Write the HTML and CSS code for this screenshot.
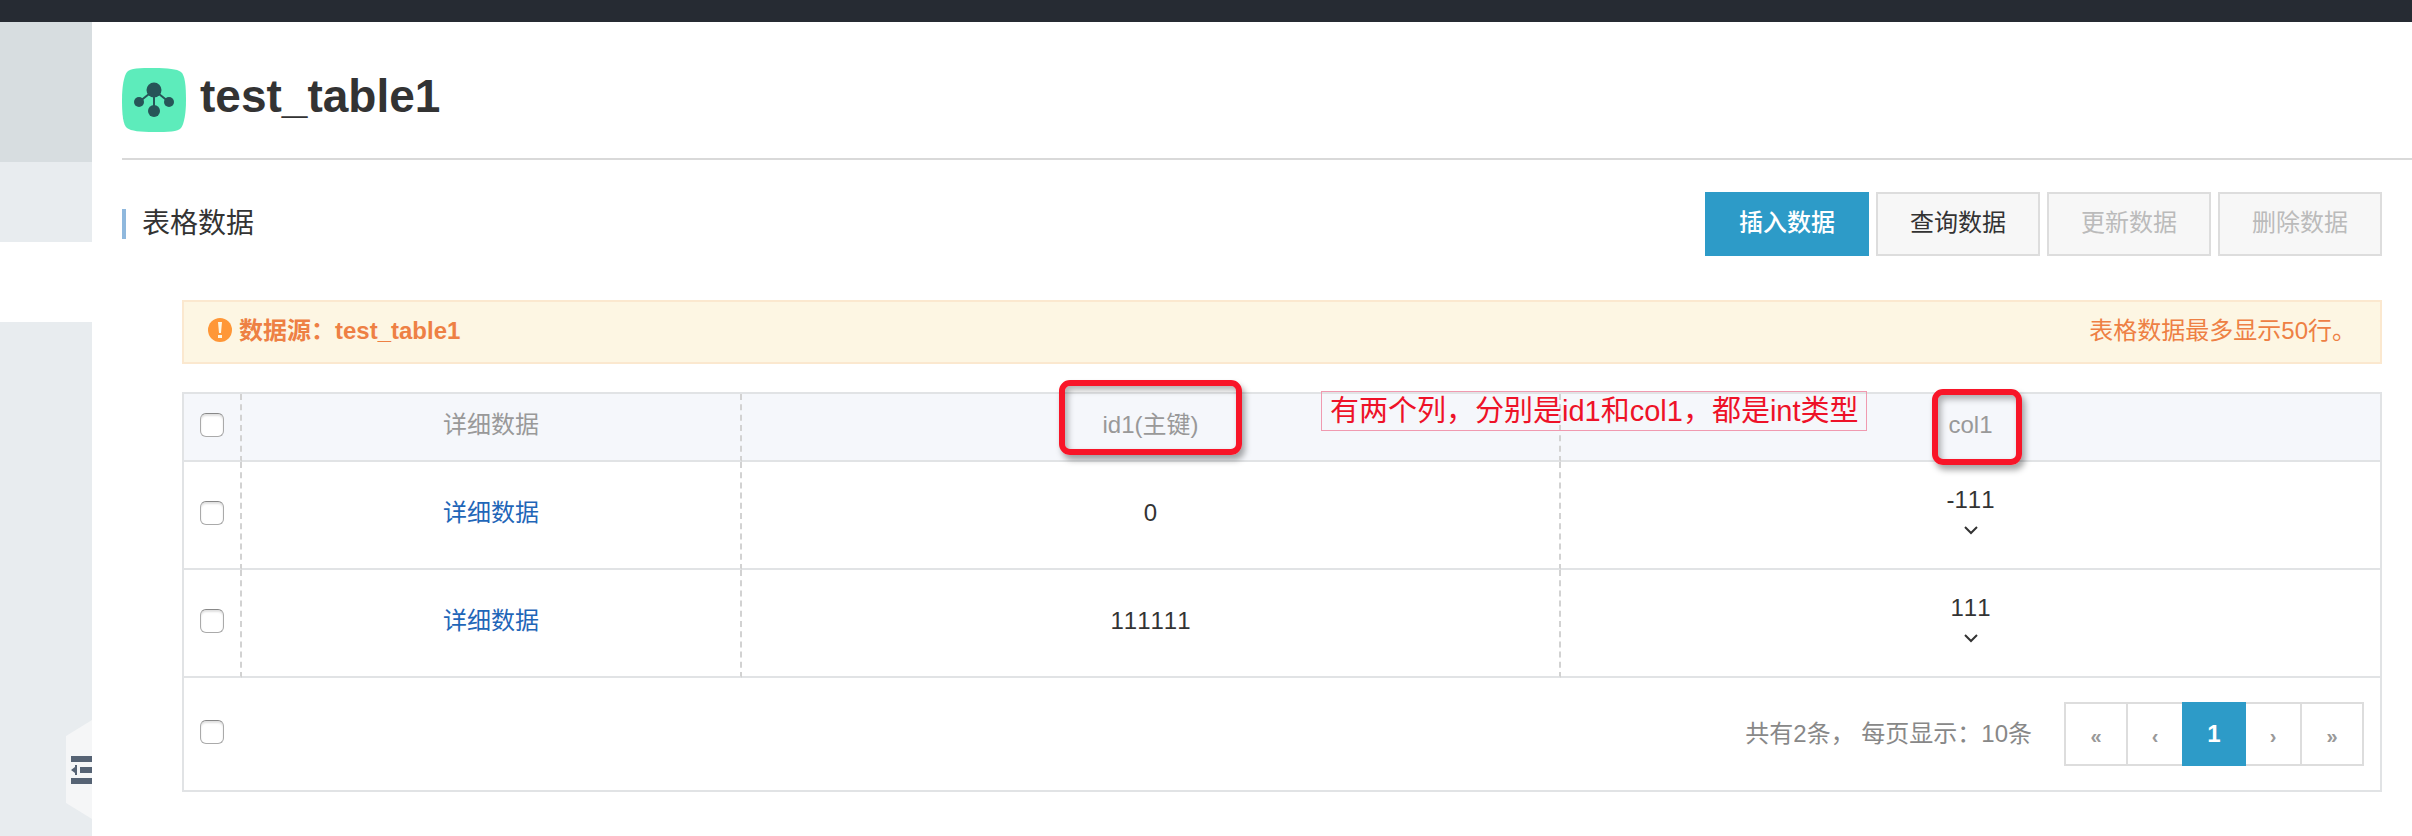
FILE: index.html
```
<!DOCTYPE html>
<html lang="zh-CN">
  <head>
    <meta charset="UTF-8" />
    <meta name="viewport" content="width=device-width, initial-scale=1.0" />
    <title>test_table1</title>
    <link rel="stylesheet" href="styles.css">
  </head>
  <body>
    <header class="topbar"></header>
    <div class="layout">
      <aside class="sidebar">
        <div class="side-group"></div>
        <div class="side-item"></div>
        <div class="side-item active"></div>
        <button class="side-toggle" type="button" aria-label="收起菜单">
          <svg width="26" height="100" viewBox="0 0 26 100">
            <path d="M26 0L0 16v67l26 16z" fill="#f5f6f7" />
            <path d="M5 36h21v6H5zM14 47h12v6H14zM5 58h21v6H5zM5 50l4-3v-2h2v10H9v-2z" fill="#566374" />
          </svg>
        </button>
      </aside>

      <main class="main">
        <div class="page-title">
          <svg class="title-icon" width="64" height="64" viewBox="0 0 64 64">
            <path d="M32 0C46 0 55 1 59 4S64 18 64 32s-2 24-5 28-13 4-27 4-23-1-27-4S0 46 0 32 2 8 5 4 18 0 32 0z" fill="#5decbb" />
            <path d="M32 22v21M32 22L17 34M32 22l15 12" stroke="#275558" stroke-width="2" fill="none" />
            <g fill="#275558">
              <circle cx="32" cy="22" r="7.5" />
              <circle cx="17" cy="34" r="5" />
              <circle cx="47" cy="34" r="5" />
              <circle cx="32" cy="43" r="6" />
            </g>
          </svg>
          <h1>test_table1</h1>
        </div>

        <div class="section-head">
          <h2>表格数据</h2>
          <div class="actions">
            <button class="btn btn-primary" type="button">插入数据</button>
            <button class="btn" type="button">查询数据</button>
            <button class="btn" type="button" disabled>更新数据</button>
            <button class="btn" type="button" disabled>删除数据</button>
          </div>
        </div>

        <div class="content">
          <div class="notice">
            <svg width="24" height="26" viewBox="0 0 24 26">
              <circle cx="12" cy="12" r="12" fill="#ff9737" />
              <path d="M10 4h4l-1 11h-2zM10 17h4v3h-4z" fill="#fdf6e3" />
            </svg>
            <strong>数据源：test_table1</strong>
            <span class="notice-tip">表格数据最多显示50行。</span>
          </div>

          <table class="data-table">
            <colgroup>
              <col class="col-check" />
              <col class="col-detail" />
              <col />
              <col />
            </colgroup>
            <thead>
              <tr>
                <th class="check"><input type="checkbox" aria-label="全选" /></th>
                <th>详细数据</th>
                <th>
                  id1(主键)
                  <span class="mark mark-id"></span>
                  <span class="note">有两个列，分别是id1和col1，都是int类型</span>
                </th>
                <th>
                  col1
                  <span class="mark mark-col"></span>
                </th>
              </tr>
            </thead>
            <tbody>
              <tr>
                <td class="check"><input type="checkbox" aria-label="选择第1行" /></td>
                <td><a href="#">详细数据</a></td>
                <td>0</td>
                <td>
                  <div class="value">-111</div>
                  <svg class="arrow" width="14" height="26" viewBox="0 0 14 26">
                    <path d="M1 13l6 6 6-6" />
                  </svg>
                </td>
              </tr>
              <tr>
                <td class="check"><input type="checkbox" aria-label="选择第2行" /></td>
                <td><a href="#">详细数据</a></td>
                <td>111111</td>
                <td>
                  <div class="value">111</div>
                  <svg class="arrow" width="14" height="26" viewBox="0 0 14 26">
                    <path d="M1 13l6 6 6-6" />
                  </svg>
                </td>
              </tr>
            </tbody>
            <tfoot>
              <tr>
                <td class="check"><input type="checkbox" aria-label="全选本页" /></td>
                <td class="pager-cell" colspan="3">
                  <div class="pager">
                    <span>共有2条， 每页显示：10条</span>
                    <nav class="pages">
                      <a class="wide" href="#">«</a>
                      <a href="#">‹</a>
                      <a class="wide current" href="#">1</a>
                      <a href="#">›</a>
                      <a class="wide" href="#">»</a>
                    </nav>
                  </div>
                </td>
              </tr>
            </tfoot>
          </table>
        </div>
      </main>
    </div>
  </body>
</html>
```
FILE: styles.css
```
* {
  box-sizing: border-box;
}
body {
  display: flex;
  flex-direction: column;
  min-height: 100vh;
  margin: 0;
  font-family: "Liberation Sans", "Noto Sans CJK SC", sans-serif;
  font-size: 24px;
  font-kerning: none;
  line-height: 28px;
  color: #333;
  background-color: #fff;
}
.topbar {
  height: 22px;
  background-color: #262b33;
}
.layout {
  display: flex;
  flex: 1;
}

/* 左侧菜单 */
.sidebar {
  display: flex;
  flex-direction: column;
  width: 92px;
  padding-bottom: 16px;
  background-color: #e8ecef;
}
.side-group {
  height: 140px;
  background-color: #d7dde0;
}
.side-item {
  height: 80px;
}
.side-item.active {
  background-color: #fff;
}
.side-toggle {
  align-self: flex-end;
  margin-top: auto;
  padding: 0;
  border: none;
  background: none;
  cursor: pointer;
}
.side-toggle svg {
  display: block;
}

/* 标题 */
.main {
  flex: 1;
  min-width: 0;
  padding-left: 30px;
}
.page-title {
  display: flex;
  align-items: center;
  gap: 14px;
  padding: 46px 0 26px;
  border-bottom: 2px solid #d9d9d9;
}
.page-title h1 {
  margin: 0;
  padding-bottom: 8px;
  font-size: 46px;
  line-height: 56px;
}
.section-head {
  display: flex;
  align-items: center;
  justify-content: space-between;
  padding: 32px 30px 0 0;
}
.section-head h2 {
  margin: 0;
  padding-left: 16px;
  border-left: 4px solid #8fb8dd;
  font-size: 28px;
  font-weight: normal;
  line-height: 30px;
}
.actions {
  display: flex;
  gap: 7px;
}
.btn {
  width: 164px;
  height: 64px;
  padding: 0 0 2px;
  border: 2px solid #ddd;
  font: inherit;
  color: #333;
  background-color: #f7f7f7;
  cursor: pointer;
}
.btn:disabled {
  color: #bbb;
  cursor: not-allowed;
}
.btn-primary {
  border-color: #2d9bc8;
  font-weight: 500;
  color: #fff;
  background-color: #2d9bc8;
}

.content {
  padding: 44px 30px 44px 60px;
}
.notice {
  display: flex;
  align-items: center;
  gap: 7px;
  height: 64px;
  margin-bottom: 28px;
  padding: 0 24px 2px;
  border: 2px solid #fbe8cf;
  color: #ee8044;
  background-color: #fdf6e3;
}
.notice-tip {
  margin-left: auto;
}

/* 数据表格 */
.data-table {
  width: 100%;
  table-layout: fixed;
  border: 2px solid #e1e3e5;
  border-bottom: none;
  border-spacing: 0;
  text-align: center;
}
.col-check {
  width: 58px;
}
.col-detail {
  width: 500px;
}
.data-table th,
.data-table td {
  height: 108px;
  padding: 0 0 4px;
  border-right: 2px dashed #d2d2d2;
  border-bottom: 2px solid #e1e3e5;
}
.data-table th:last-child,
.data-table td:last-child,
.data-table tfoot td {
  border-right: none;
}
.data-table th {
  position: relative;
  height: 68px;
  font-weight: normal;
  color: #999;
  background-color: #f5f7fb;
}
.data-table a {
  color: #1f66b8;
  text-decoration: none;
}
.data-table .check {
  padding-left: 16px;
  text-align: left;
}
.check input {
  appearance: none;
  display: block;
  width: 24px;
  height: 24px;
  margin: 0;
  border: 1px solid #aaa;
  border-top-color: #888;
  border-radius: 6px;
  background-color: #fff;
  box-shadow: inset 0 2px 2px rgba(0, 0, 0, 0.12);
}
.arrow {
  display: block;
  margin: 0 auto;
  fill: none;
  stroke: #333;
  stroke-width: 2;
}
.data-table tfoot td {
  height: 114px;
}
.data-table .pager-cell {
  padding: 0;
}

/* 分页 */
.pager {
  display: flex;
  align-items: center;
  justify-content: flex-end;
  gap: 32px;
  padding-right: 16px;
  color: #888;
}
.pages {
  display: flex;
  border: 2px solid #ddd;
}
.pages a {
  width: 56px;
  height: 60px;
  padding-top: 2px;
  border-right: 2px solid #ddd;
  font-size: 20px;
  font-weight: bold;
  line-height: 60px;
  color: #999;
}
.pages a.wide {
  width: 62px;
}
.pages a:last-child {
  width: 60px;
  border-right: none;
}
.pages a.current {
  width: 64px;
  height: 64px;
  margin: -2px 0 -2px -2px;
  padding-top: 0;
  border: 2px solid #2d9bc8;
  font-size: 24px;
  color: #fff;
  background-color: #2d9bc8;
}

/* 红色标注 */
.mark {
  position: absolute;
  z-index: 1;
  border: 6px solid #f81528;
  border-radius: 11px;
  box-shadow: 3px 5px 6px rgba(0, 0, 0, 0.35), inset 3px 4px 6px rgba(0, 0, 0, 0.3);
}
.mark-id {
  top: -14px;
  left: calc(50% - 92px);
  width: 183px;
  height: 75px;
}
.mark-col {
  top: -5px;
  left: calc(50% - 39px);
  width: 90px;
  height: 76px;
}
.note {
  position: absolute;
  top: -3px;
  left: 579px;
  z-index: 1;
  width: 546px;
  height: 40px;
  padding-left: 8px;
  border: 1px solid #f09ab0;
  font-size: 29px;
  line-height: 38px;
  text-align: left;
  white-space: nowrap;
  color: #ee1228;
}
```
